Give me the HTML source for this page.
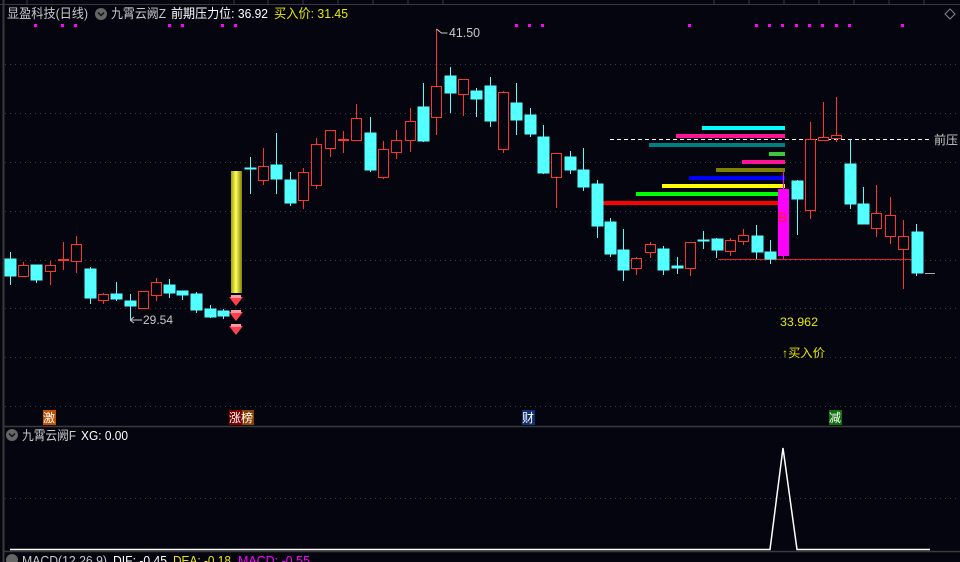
<!DOCTYPE html>
<html><head><meta charset="utf-8"><style>
html,body{margin:0;padding:0;background:#05050f;width:960px;height:562px;overflow:hidden}
svg{display:block}
text{font-family:"Liberation Sans","Noto Sans CJK SC",sans-serif}
</style></head><body>
<svg width="960" height="562" viewBox="0 0 960 562" xmlns="http://www.w3.org/2000/svg">
<rect width="960" height="562" fill="#05050f"/>
<line x1="3.5" y1="0" x2="3.5" y2="562" stroke="#3a3a3a" stroke-width="2"/>
<line x1="0" y1="4.5" x2="960" y2="4.5" stroke="#3a3a3a"/>
<g stroke="#3a3a3a"><line x1="27" y1="0" x2="27" y2="4"/><line x1="234" y1="0" x2="234" y2="4"/><line x1="268" y1="0" x2="268" y2="4"/><line x1="303" y1="0" x2="303" y2="4"/><line x1="338" y1="0" x2="338" y2="4"/><line x1="373" y1="0" x2="373" y2="4"/><line x1="408" y1="0" x2="408" y2="4"/><line x1="443" y1="0" x2="443" y2="4"/><line x1="714" y1="0" x2="714" y2="4"/><line x1="749" y1="0" x2="749" y2="4"/><line x1="784" y1="0" x2="784" y2="4"/><line x1="819" y1="0" x2="819" y2="4"/><line x1="854" y1="0" x2="854" y2="4"/><line x1="889" y1="0" x2="889" y2="4"/><line x1="924" y1="0" x2="924" y2="4"/></g>
<g stroke="#3c3c3c" stroke-dasharray="1,4">
<line x1="5" y1="64.5" x2="960" y2="64.5"/><line x1="5" y1="113.5" x2="960" y2="113.5"/><line x1="5" y1="162.5" x2="960" y2="162.5"/><line x1="5" y1="211.5" x2="960" y2="211.5"/><line x1="5" y1="260.5" x2="960" y2="260.5"/><line x1="5" y1="308.5" x2="960" y2="308.5"/><line x1="5" y1="357.5" x2="960" y2="357.5"/><line x1="5" y1="406.5" x2="960" y2="406.5"/><line x1="5" y1="498.5" x2="960" y2="498.5"/>
</g>
<line x1="4" y1="426.5" x2="960" y2="426.5" stroke="#3a3a3a" stroke-width="1.5"/>
<line x1="4" y1="551.5" x2="960" y2="551.5" stroke="#3a3a3a" stroke-width="1.5"/>
<text x="7" y="18" font-size="13" fill="#c8c8c8" textLength="81" lengthAdjust="spacingAndGlyphs">显盈科技(日线)</text>
<circle cx="101" cy="14" r="6" fill="#666"/><path d="M98 12.5l3 3 3-3" stroke="#111" stroke-width="1.5" fill="none"/>
<text x="111" y="18" font-size="13" fill="#c8c8c8" textLength="55" lengthAdjust="spacingAndGlyphs">九霄云阙Z</text>
<text x="171" y="18" font-size="13" fill="#ffffff" textLength="97" lengthAdjust="spacingAndGlyphs">前期压力位: 36.92</text>
<text x="274" y="18" font-size="13" fill="#e8e800" textLength="74" lengthAdjust="spacingAndGlyphs">买入价: 31.45</text>
<path d="M950 9l5 5-5 5-5-5z" stroke="#888" fill="none"/>
<g fill="#ff00ff">
<rect x="34" y="24" width="3" height="3"/><rect x="61" y="24" width="3" height="3"/><rect x="74" y="24" width="3" height="3"/><rect x="168" y="24" width="3" height="3"/><rect x="181" y="24" width="3" height="3"/><rect x="221" y="24" width="3" height="3"/><rect x="234" y="24" width="3" height="3"/><rect x="515" y="24" width="3" height="3"/><rect x="528" y="24" width="3" height="3"/><rect x="541" y="24" width="3" height="3"/><rect x="688" y="24" width="3" height="3"/><rect x="755" y="24" width="3" height="3"/><rect x="768" y="24" width="3" height="3"/><rect x="781" y="24" width="3" height="3"/><rect x="795" y="24" width="3" height="3"/><rect x="808" y="24" width="3" height="3"/><rect x="821" y="24" width="3" height="3"/><rect x="835" y="24" width="3" height="3"/><rect x="848" y="24" width="3" height="3"/><rect x="901" y="24" width="3" height="3"/>
</g>
<rect x="702" y="126" width="83" height="4" fill="#00ffff"/>
<rect x="676" y="134" width="109" height="4" fill="#ff1493"/>
<rect x="649" y="143" width="136" height="4" fill="#008080"/>
<rect x="769" y="152" width="16" height="4" fill="#3cc83c"/>
<rect x="742" y="160" width="43" height="4" fill="#ff1493"/>
<rect x="716" y="168" width="69" height="4" fill="#808000"/>
<rect x="689" y="176" width="96" height="4" fill="#0000ff"/>
<rect x="662" y="184" width="123" height="4" fill="#ffff00"/>
<rect x="636" y="192" width="143" height="4" fill="#00ff00"/>
<rect x="596" y="201" width="183" height="4" fill="#ff0000"/>
<line x1="610" y1="139.5" x2="930" y2="139.5" stroke="#ffffff" stroke-dasharray="4,3"/>
<text x="934" y="144" font-size="12" fill="#c8c8c8">前压</text>
<line x1="718" y1="259.5" x2="917" y2="259.5" stroke="#e02020"/>
<g stroke="#54ffff" fill="#54ffff">
<line x1="10.5" y1="252" x2="10.5" y2="285"/><rect x="5" y="259" width="11" height="17"/>
<line x1="36.5" y1="265" x2="36.5" y2="283"/><rect x="31" y="265" width="11" height="15"/>
<line x1="90.5" y1="267" x2="90.5" y2="304"/><rect x="85" y="269" width="11" height="29"/>
<line x1="116.5" y1="282" x2="116.5" y2="301"/><rect x="111" y="294" width="11" height="5"/>
<line x1="130.5" y1="294" x2="130.5" y2="320"/><rect x="125" y="301" width="11" height="5"/>
<line x1="169.5" y1="279" x2="169.5" y2="298"/><rect x="164" y="285" width="11" height="8"/>
<line x1="182.5" y1="291" x2="182.5" y2="300"/><rect x="177" y="291" width="11" height="4"/>
<line x1="196.5" y1="292" x2="196.5" y2="313"/><rect x="191" y="294" width="11" height="16"/>
<line x1="210.5" y1="305" x2="210.5" y2="318"/><rect x="205" y="309" width="11" height="8"/>
<line x1="223.5" y1="309" x2="223.5" y2="319"/><rect x="218" y="311" width="11" height="5"/>
<line x1="250.5" y1="157" x2="250.5" y2="194"/><rect x="245" y="168" width="11" height="1"/>
<line x1="276.5" y1="133" x2="276.5" y2="194"/><rect x="271" y="165" width="11" height="14"/>
<line x1="290.5" y1="172" x2="290.5" y2="206"/><rect x="285" y="180" width="11" height="23"/>
<line x1="370.5" y1="117" x2="370.5" y2="172"/><rect x="365" y="133" width="11" height="37"/>
<line x1="423.5" y1="83" x2="423.5" y2="142"/><rect x="418" y="107" width="11" height="34"/>
<line x1="450.5" y1="67" x2="450.5" y2="113"/><rect x="445" y="76" width="11" height="17"/>
<line x1="476.5" y1="88" x2="476.5" y2="117"/><rect x="471" y="91" width="11" height="8"/>
<line x1="490.5" y1="77" x2="490.5" y2="127"/><rect x="485" y="86" width="11" height="35"/>
<line x1="516.5" y1="83" x2="516.5" y2="135"/><rect x="511" y="103" width="11" height="17"/>
<line x1="530.5" y1="108" x2="530.5" y2="137"/><rect x="525" y="115" width="11" height="19"/>
<line x1="543.5" y1="125" x2="543.5" y2="174"/><rect x="538" y="137" width="11" height="36"/>
<line x1="570.5" y1="151" x2="570.5" y2="174"/><rect x="565" y="157" width="11" height="13"/>
<line x1="583.5" y1="148" x2="583.5" y2="191"/><rect x="578" y="170" width="11" height="17"/>
<line x1="597.5" y1="180" x2="597.5" y2="238"/><rect x="592" y="184" width="11" height="42"/>
<line x1="610.5" y1="218" x2="610.5" y2="257"/><rect x="605" y="222" width="11" height="32"/>
<line x1="623.5" y1="229" x2="623.5" y2="281"/><rect x="618" y="250" width="11" height="20"/>
<line x1="663.5" y1="246" x2="663.5" y2="275"/><rect x="658" y="249" width="11" height="21"/>
<line x1="677.5" y1="257" x2="677.5" y2="274"/><rect x="672" y="266" width="11" height="2"/>
<line x1="703.5" y1="231" x2="703.5" y2="249"/><rect x="698" y="240" width="11" height="1"/>
<line x1="716.5" y1="238" x2="716.5" y2="258"/><rect x="712" y="239" width="11" height="11"/>
<line x1="756.5" y1="225" x2="756.5" y2="259"/><rect x="752" y="236" width="11" height="16"/>
<line x1="770.5" y1="240" x2="770.5" y2="264"/><rect x="765" y="252" width="11" height="7"/>
<line x1="797.5" y1="180" x2="797.5" y2="235"/><rect x="792" y="181" width="11" height="18"/>
<line x1="850.5" y1="139" x2="850.5" y2="209"/><rect x="845" y="164" width="11" height="40"/>
<line x1="863.5" y1="187" x2="863.5" y2="224"/><rect x="858" y="204" width="11" height="20"/>
<line x1="916.5" y1="224" x2="916.5" y2="276"/><rect x="912" y="232" width="11" height="41"/>
</g>
<g stroke="#ff3232" fill="#05050f">
<line x1="23.5" y1="262" x2="23.5" y2="265"/><rect x="18.5" y="265.5" width="10" height="11"/>
<line x1="50.5" y1="261" x2="50.5" y2="285"/><rect x="45.5" y="265.5" width="10" height="6"/>
<line x1="63.5" y1="242" x2="63.5" y2="270"/><line x1="58" y1="260" x2="69" y2="260" stroke-width="2"/>
<line x1="76.5" y1="236" x2="76.5" y2="273"/><rect x="71.5" y="244.5" width="10" height="17"/>
<line x1="103.5" y1="293" x2="103.5" y2="304"/><rect x="98.5" y="294.5" width="10" height="6"/>
<rect x="138.5" y="291.5" width="10" height="17"/>
<line x1="156.5" y1="278" x2="156.5" y2="301"/><rect x="151.5" y="282.5" width="10" height="13"/>
<line x1="263.5" y1="148" x2="263.5" y2="185"/><rect x="258.5" y="166.5" width="10" height="14"/>
<line x1="303.5" y1="168" x2="303.5" y2="209"/><rect x="298.5" y="172.5" width="10" height="28"/>
<line x1="316.5" y1="138" x2="316.5" y2="189"/><rect x="311.5" y="144.5" width="10" height="41"/>
<line x1="330.5" y1="130" x2="330.5" y2="157"/><rect x="325.5" y="130.5" width="10" height="18"/>
<line x1="343.5" y1="131" x2="343.5" y2="153"/><line x1="338" y1="140" x2="349" y2="140" stroke-width="2"/>
<line x1="356.5" y1="104" x2="356.5" y2="141"/><rect x="351.5" y="118.5" width="10" height="22"/>
<line x1="383.5" y1="141" x2="383.5" y2="179"/><rect x="378.5" y="149.5" width="10" height="28"/>
<line x1="396.5" y1="130" x2="396.5" y2="159"/><rect x="391.5" y="140.5" width="10" height="12"/>
<line x1="410.5" y1="108" x2="410.5" y2="152"/><rect x="405.5" y="121.5" width="10" height="19"/>
<line x1="436.5" y1="29" x2="436.5" y2="135"/><rect x="431.5" y="86.5" width="10" height="31"/>
<line x1="463.5" y1="79" x2="463.5" y2="116"/><rect x="458.5" y="79.5" width="10" height="15"/>
<line x1="503.5" y1="91" x2="503.5" y2="153"/><rect x="498.5" y="92.5" width="10" height="57"/>
<line x1="556.5" y1="153" x2="556.5" y2="208"/><rect x="551.5" y="153.5" width="10" height="24"/>
<line x1="636.5" y1="257" x2="636.5" y2="275"/><rect x="631.5" y="258.5" width="10" height="10"/>
<line x1="650.5" y1="242" x2="650.5" y2="258"/><rect x="645.5" y="244.5" width="10" height="8"/>
<line x1="690.5" y1="242" x2="690.5" y2="276"/><rect x="685.5" y="242.5" width="10" height="26"/>
<line x1="730.5" y1="238" x2="730.5" y2="256"/><rect x="725.5" y="240.5" width="10" height="11"/>
<line x1="743.5" y1="229" x2="743.5" y2="245"/><rect x="738.5" y="235.5" width="10" height="6"/>
<line x1="810.5" y1="122" x2="810.5" y2="219"/><rect x="805.5" y="139.5" width="10" height="71"/>
<line x1="823.5" y1="102" x2="823.5" y2="141"/><rect x="818.5" y="137.5" width="10" height="3"/>
<line x1="836.5" y1="97" x2="836.5" y2="142"/><rect x="831.5" y="135.5" width="10" height="3"/>
<line x1="876.5" y1="185" x2="876.5" y2="237"/><rect x="871.5" y="213.5" width="10" height="15"/>
<line x1="890.5" y1="197" x2="890.5" y2="244"/><rect x="885.5" y="215.5" width="10" height="21"/>
<line x1="903.5" y1="220" x2="903.5" y2="289"/><rect x="898.5" y="236.5" width="10" height="13"/>
</g>
<line x1="925" y1="273.5" x2="935" y2="273.5" stroke="#aaa"/>
<line x1="783.5" y1="172" x2="783.5" y2="259" stroke="#ff00ff"/>
<rect x="778" y="189" width="11" height="67" fill="#ff00ff"/>
<text x="778" y="222" font-size="13" fill="#ff2020">B</text>
<defs><linearGradient id="yg" x1="0" x2="1"><stop offset="0" stop-color="#a0a000"/><stop offset="0.45" stop-color="#ffff60"/><stop offset="1" stop-color="#808000"/></linearGradient></defs>
<rect x="231" y="171" width="11" height="122" fill="url(#yg)"/>
<g fill="#ff4050"><path d="M229 297h14l-7 9z"/><path d="M229 312h14l-7 9z"/><path d="M229 326h14l-7 9z"/></g>
<g fill="#ff9aa0"><rect x="231" y="295" width="10" height="3"/><rect x="231" y="310" width="10" height="3"/><rect x="231" y="324" width="10" height="3"/></g>
<path d="M436.5 29 l5 4 h6" stroke="#c8c8c8" fill="none"/>
<text x="449" y="37" font-size="13" fill="#c8c8c8" textLength="31" lengthAdjust="spacingAndGlyphs">41.50</text>
<path d="M130 320h12M130 320l4-3M130 320l4 3" stroke="#c8c8c8" fill="none"/>
<text x="143" y="324" font-size="12" fill="#c8c8c8" textLength="30" lengthAdjust="spacingAndGlyphs">29.54</text>
<text x="780" y="326" font-size="12" fill="#e8e800" textLength="38" lengthAdjust="spacingAndGlyphs">33.962</text>
<text x="782" y="357" font-size="12" fill="#e8e800" textLength="43" lengthAdjust="spacingAndGlyphs">↑买入价</text>
<rect x="43" y="410" width="13" height="15" fill="#c05000"/><text x="43" y="422" font-size="12" fill="#fff">激</text>
<rect x="229" y="410" width="13" height="15" fill="#7a0000"/><rect x="242" y="410" width="12" height="15" fill="#8a4000"/><text x="229" y="422" font-size="12" fill="#fff">涨榜</text>
<rect x="522" y="410" width="13" height="15" fill="#103070"/><text x="522" y="422" font-size="12" fill="#fff">财</text>
<rect x="829" y="410" width="13" height="15" fill="#107010"/><text x="829" y="422" font-size="12" fill="#fff">减</text>
<circle cx="12" cy="435" r="6" fill="#666"/><path d="M9 433.5l3 3 3-3" stroke="#111" stroke-width="1.5" fill="none"/>
<text x="22" y="440" font-size="13" fill="#c8c8c8" textLength="54" lengthAdjust="spacingAndGlyphs">九霄云阙F</text>
<text x="81" y="440" font-size="13" fill="#ffffff" textLength="47" lengthAdjust="spacingAndGlyphs">XG: 0.00</text>
<path d="M10 549.5H770L783 448L797 549.5H930" stroke="#ffffff" stroke-width="1.5" fill="none"/>
<circle cx="12" cy="560" r="6" fill="#666"/>
<text x="22" y="565" font-size="13" fill="#c8c8c8" textLength="85" lengthAdjust="spacingAndGlyphs">MACD(12,26,9)</text>
<text x="113" y="565" font-size="13" fill="#ffffff" textLength="54" lengthAdjust="spacingAndGlyphs">DIF: -0.45</text>
<text x="173" y="565" font-size="13" fill="#e8e800" textLength="58" lengthAdjust="spacingAndGlyphs">DEA: -0.18</text>
<text x="238" y="565" font-size="13" fill="#ff00ff" textLength="72" lengthAdjust="spacingAndGlyphs">MACD: -0.55</text>
</svg>
</body></html>
